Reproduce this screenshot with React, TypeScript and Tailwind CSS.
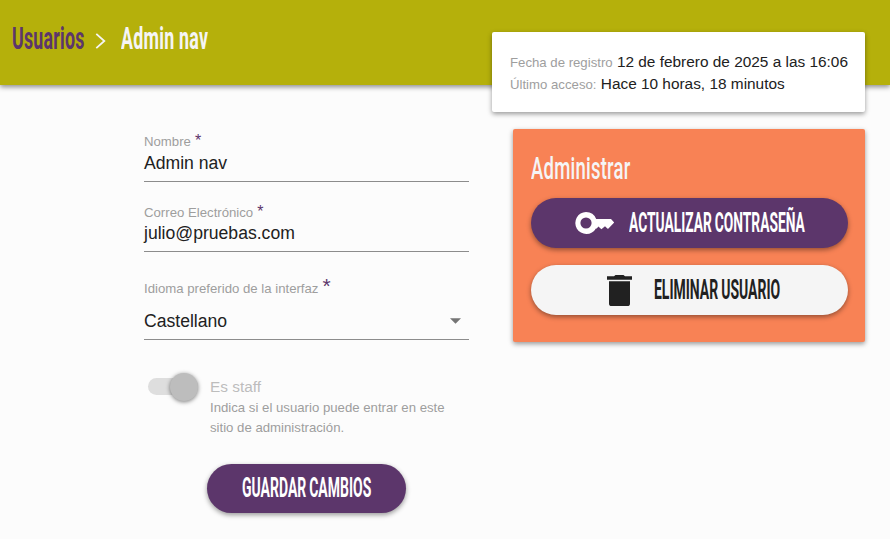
import React from "react";

const league = "font-['Roboto',sans-serif] inline-block origin-left whitespace-nowrap leading-none";

function Field({ label, value, className, valueClass }: { label: string; value: string; className: string; valueClass: string }) {
  return (
    <div className={`border-b border-[#8c8c8c] ${className}`}>
      <div className="flex h-[18px] text-[13.2px] leading-[18px] text-[#9e9e9e]">
        {label}
        <span className="-mt-px ml-1 text-[16px] text-[#5c366b]">*</span>
      </div>
      <div className={`text-[17.6px] text-[#212121] ${valueClass}`}>{value}</div>
    </div>
  );
}

export default function App() {
  return (
    <div className="h-[539px] w-[890px] overflow-hidden bg-[#fcfcfc] font-['Liberation_Sans',Arial,sans-serif]">
      <header className="flex h-[85px] bg-[#b5b00b] pl-3 pt-[22px] shadow-[0_2px_5px_rgba(0,0,0,0.45)]">
        <div className="w-[83px]">
          <span className={`${league} scale-x-[0.557] text-[32px] font-bold tracking-[0.4px] text-[#5c366b]`}>Usuarios</span>
        </div>
        <svg className="mt-[11px] h-[16px] w-[11px] shrink-0" viewBox="0 0 11 16" fill="none" stroke="#f5f5f5" strokeWidth="1.8">
          <path d="M1.3 .8 9.3 8 1.3 15.2" />
        </svg>
        <div className="ml-[15px] w-[100px]">
          <span className={`${league} scale-x-[0.558] text-[32px] font-bold tracking-[0.4px] text-[#f5f5f5]`}>Admin nav</span>
        </div>
      </header>

      <main className="flex">
        <form className="ml-[144px] w-[325px] pt-[48px]">
          <Field label="Nombre" value="Admin nav" className="h-[49px]" valueClass="leading-[24px]" />
          <Field label="Correo Electrónico" value="julio@pruebas.com" className="mt-[22px] h-[48px]" valueClass="leading-[22px]" />
          <div className="mt-[27px] h-[61px] border-b border-[#8c8c8c]">
            <div className="flex h-[20px] text-[13.2px] leading-[20px] text-[#9e9e9e]">
              Idioma preferido de la interfaz
              <span className="-mt-[3px] ml-1 text-[21px] text-[#5c366b]">*</span>
            </div>
            <div className="mt-[10px] flex items-center justify-between pr-[8px] text-[17.6px] leading-[24px] text-[#212121]">
              Castellano
              <svg className="h-[6px] w-[11px]" viewBox="0 0 11 6" fill="#757575">
                <path d="M0 .2h11L5.5 5.7z" />
              </svg>
            </div>
          </div>
          <div className="mt-[33px] flex">
            <div className="ml-[4px] mt-[5px] flex h-[17px] w-[50px] items-center justify-end rounded-full bg-[#dedede]">
              <div className="h-[28px] w-[28px] shrink-0 rounded-full bg-[#bdbdbd] shadow-[0_1px_4px_rgba(0,0,0,0.5)]" />
            </div>
            <div className="ml-[12px] pt-[3px]">
              <div className="h-[22px] text-[15.4px] leading-[21px] text-[#bdbdbd]">Es staff</div>
              <div className="w-[250px] text-[13.2px] leading-[20px] text-[#9e9e9e]">
                Indica si el usuario puede entrar en este sitio de administración.
              </div>
            </div>
          </div>
          <button type="button" className="ml-[63px] mt-[26px] flex h-[49px] w-[199px] items-center rounded-full bg-[#5c366b] pl-[35px] shadow-[0_2px_5px_rgba(0,0,0,0.4)]">
            <span className={`${league} scale-x-[0.518] text-[27px] font-bold text-white [word-spacing:-1px]`}>GUARDAR CAMBIOS</span>
          </button>
        </form>

        <aside className="relative -mt-[53px] ml-[23px] w-[373px]">
          <section className="h-[80px] rounded-[2px] bg-white pl-[18px] pt-[19px] text-[15.4px] leading-[22px] text-[#212121] shadow-[0_2px_5px_rgba(0,0,0,0.4)]">
            <div className="h-[22px] whitespace-nowrap">
              <span className="text-[13.2px] text-[#9e9e9e]">Fecha de registro</span> 12 de febrero de 2025 a las 16:06
            </div>
            <div className="h-[22px] whitespace-nowrap">
              <span className="text-[13.2px] text-[#9e9e9e]">Último acceso:</span> Hace 10 horas, 18 minutos
            </div>
          </section>
          <section className="ml-[21px] mt-[17px] h-[213px] w-[352px] rounded-[2px] bg-[#f88255] px-[18px] pt-[23px] shadow-[0_2px_5px_rgba(0,0,0,0.4)]">
            <h2 className="h-[46px]">
              <span className={`${league} scale-x-[0.578] text-[32px] font-medium tracking-[0.4px] text-[#f5f5f5]`}>Administrar</span>
            </h2>
            <button type="button" className="flex h-[50px] w-[317px] items-center rounded-full bg-[#5c366b] pl-[44px] shadow-[0_2px_5px_rgba(0,0,0,0.4)]">
              <svg className="h-[22px] w-[40px] shrink-0" viewBox="0 0 40 22" fill="white">
                <path fillRule="evenodd" d="M11 0a11 11 0 0 1 10.2 7H36l3.2 3.6-6 6.2h-.6L30 14.2l-3.6 3-3-2.6-1.6 1.8h-.9A11 11 0 1 1 11 0zm0 5.4a5.6 5.6 0 1 0 0 11.2 5.6 5.6 0 0 0 0-11.2z" />
              </svg>
              <span className={`${league} ml-[14px] scale-x-[0.511] text-[27px] font-bold text-white [word-spacing:-1px]`}>ACTUALIZAR CONTRASEÑA</span>
            </button>
            <button type="button" className="mt-[17px] flex h-[50px] w-[317px] items-center rounded-full bg-[#f5f5f5] pl-[76px] shadow-[0_2px_5px_rgba(0,0,0,0.4)]">
              <svg className="mt-[2px] h-[32px] w-[25px] shrink-0" viewBox="0 0 25 32" fill="#212121">
                <path d="M0 1.3h7L8.5 0h8L18 1.3h7v3.4H0zM2 6.2h21v22.3a2.6 2.6 0 0 1-2.6 2.6H4.6A2.6 2.6 0 0 1 2 28.5z" />
              </svg>
              <span className={`${league} ml-[22px] scale-x-[0.518] text-[27px] font-bold text-[#212121] [word-spacing:-1px]`}>ELIMINAR USUARIO</span>
            </button>
          </section>
        </aside>
      </main>
    </div>
  );
}
